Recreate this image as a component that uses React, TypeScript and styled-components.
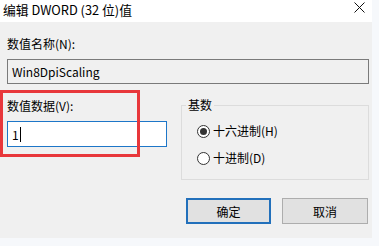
import React, { useState } from 'react';
import styled, { createGlobalStyle } from 'styled-components';

const GlobalStyle = createGlobalStyle`
  html, body {
    margin: 0;
    padding: 0;
    background: #f6f8fb;
  }
  body {
    font-family: "Noto Sans CJK SC", "Noto Sans", sans-serif;
    font-size: 12px;
    color: #000;
  }
`;

const Window = styled.div`
  position: relative;
  width: 372px;
  height: 238px;
  background: #f0f0f0;
  display: flex;
  flex-direction: column;
`;

const TitleBar = styled.div`
  height: 22px;
  background: #fff;
  display: flex;
  align-items: center;
  justify-content: space-between;
  padding: 0 3px 0 3px;
  box-sizing: border-box;
`;

const Title = styled.span`
  font-size: 12.8px;
  line-height: 16px;
  margin-top: -3px;
`;

const CloseButton = styled.button`
  border: none;
  background: transparent;
  padding: 0;
  width: 14px;
  height: 14px;
  margin: -8px 3px 0 0;
  display: flex;
  align-items: center;
  justify-content: center;
`;

const Body = styled.div`
  padding: 14px 3px 0 7px;
  display: flex;
  flex-direction: column;
`;

const Label = styled.div`
  line-height: 16px;
  height: 16px;
`;

const TextBox = styled.div<{ $focused?: boolean }>`
  margin-top: 7px;
  height: ${p => (p.$focused ? 26 : 25)}px;
  box-sizing: border-box;
  border: 1px solid ${p => (p.$focused ? '#1d76c8' : '#7a7a7a')};
  background: ${p => (p.$focused ? '#fff' : '#f0f0f0')};
  padding: 0 4px;
  display: flex;
  align-items: center;
  font-size: 12px;
`;

const Caret = styled.span`
  display: inline-block;
  width: 1px;
  height: 15px;
  background: #000;
  margin-left: 1px;
`;

const Row = styled.div`
  display: flex;
  gap: 14px;
`;

const DataColumn = styled.div`
  width: 160px;
  padding-top: 14px;
  display: flex;
  flex-direction: column;
`;

const GroupBox = styled.fieldset`
  width: 188px;
  height: 83px;
  box-sizing: border-box;
  margin: 13px 0 0 0;
  padding: 10px 0 0 15px;
  border: 1px solid #dcdcdc;
  display: flex;
  flex-direction: column;
  gap: 11px;
`;

const Legend = styled.legend`
  padding: 0 2px;
  margin-left: -11px;
  line-height: 16px;
`;

const RadioRow = styled.label`
  display: flex;
  align-items: center;
  gap: 3px;
  height: 16px;
  line-height: 16px;
`;

const RadioCircle = styled.span<{ $checked: boolean }>`
  width: 13px;
  height: 13px;
  box-sizing: border-box;
  border-radius: 50%;
  border: 1px solid #333;
  background: #fff;
  display: flex;
  align-items: center;
  justify-content: center;

  &::after {
    content: '';
    width: 7px;
    height: 7px;
    border-radius: 50%;
    background: #333;
    display: ${p => (p.$checked ? 'block' : 'none')};
  }
`;

const ButtonRow = styled.div`
  display: flex;
  justify-content: flex-end;
  gap: 11px;
  margin-top: 18px;
  padding-right: 1px;
`;

const Button = styled.button<{ $default?: boolean }>`
  width: ${p => (p.$default ? 85 : 86)}px;
  height: 26px;
  box-sizing: border-box;
  background: #e1e1e1;
  border: ${p => (p.$default ? '2px solid #2270bb' : '1px solid #adadad')};
  font-family: "Noto Sans CJK SC", "Noto Sans", sans-serif;
  font-size: 12px;
  color: #000;
  padding: 0;
`;

const Annotation = styled.div`
  position: absolute;
  left: 0;
  top: 90px;
  width: 140px;
  height: 67px;
  box-sizing: border-box;
  border: 3px solid #e8373b;
  pointer-events: none;
`;

const CloseIcon = () => (
  <svg width="11" height="11" viewBox="0 0 11 11">
    <path d="M0.5 0.5 L10.5 10.5 M10.5 0.5 L0.5 10.5" stroke="#111" strokeWidth="1" fill="none" />
  </svg>
);

const App: React.FC = () => {
  const [hex, setHex] = useState(true);

  return (
    <>
      <GlobalStyle />
      <Window>
        <TitleBar>
          <Title>编辑 DWORD (32 位)值</Title>
          <CloseButton>
            <CloseIcon />
          </CloseButton>
        </TitleBar>
        <Body>
          <Label>数值名称(N):</Label>
          <TextBox>Win8DpiScaling</TextBox>
          <Row>
            <DataColumn>
              <Label>数值数据(V):</Label>
              <TextBox $focused>
                1<Caret />
              </TextBox>
            </DataColumn>
            <GroupBox>
              <Legend>基数</Legend>
              <RadioRow onClick={() => setHex(true)}>
                <RadioCircle $checked={hex} />
                十六进制(H)
              </RadioRow>
              <RadioRow onClick={() => setHex(false)}>
                <RadioCircle $checked={!hex} />
                十进制(D)
              </RadioRow>
            </GroupBox>
          </Row>
          <ButtonRow>
            <Button $default>确定</Button>
            <Button>取消</Button>
          </ButtonRow>
        </Body>
        <Annotation />
      </Window>
    </>
  );
};

export default App;
